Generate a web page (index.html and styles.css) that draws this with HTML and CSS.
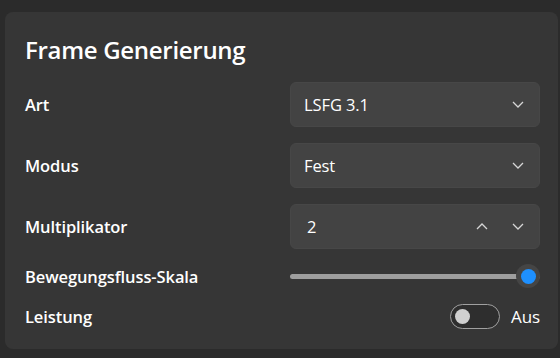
FILE: index.html
```html
<!DOCTYPE html>
<html lang="de">
<head>
    <meta charset="UTF-8">
    <meta name="viewport" content="width=device-width, initial-scale=1.0">
    <title>Frame Generierung</title>
    <link rel="stylesheet" href="styles.css">
</head>
<body>
    <div class="settings-card">
        <h2 class="card-title">Frame Generierung</h2>

        <div class="setting-row">
            <div class="setting-label">Art</div>
            <div class="combo-box">
                <span class="combo-value">LSFG 3.1</span>
                <svg class="chevron" width="12" height="7" viewBox="0 0 12 7"><path d="M1 1l5 5 5-5"/></svg>
            </div>
        </div>

        <div class="setting-row">
            <div class="setting-label">Modus</div>
            <div class="combo-box">
                <span class="combo-value">Fest</span>
                <svg class="chevron" width="12" height="7" viewBox="0 0 12 7"><path d="M1 1l5 5 5-5"/></svg>
            </div>
        </div>

        <div class="setting-row">
            <div class="setting-label">Multiplikator</div>
            <div class="combo-box number-box">
                <span class="combo-value">2</span>
                <div class="spin-buttons">
                    <svg class="chevron" width="12" height="7" viewBox="0 0 12 7"><path d="M1 6l5-5 5 5"/></svg>
                    <svg class="chevron" width="12" height="7" viewBox="0 0 12 7"><path d="M1 1l5 5 5-5"/></svg>
                </div>
            </div>
        </div>

        <div class="setting-row slider-row">
            <div class="setting-label">Bewegungsfluss-Skala</div>
            <div class="slider">
                <div class="slider-track"></div>
                <div class="slider-thumb"><div class="thumb-dot"></div></div>
            </div>
        </div>

        <div class="setting-row toggle-row">
            <div class="setting-label">Leistung</div>
            <div class="toggle-wrap">
                <div class="toggle-switch"><div class="toggle-knob"></div></div>
                <span class="toggle-text">Aus</span>
            </div>
        </div>
    </div>
</body>
</html>
```

FILE: styles.css
```css
body {
    margin: 0;
    background: #2b2b2b;
    font-family: "Open Sans", "Noto Sans", sans-serif;
    color: #ffffff;
}

.settings-card {
    margin: 12px 2px 0 5px;
    height: 337px;
    box-sizing: border-box;
    background: #363636;
    border-radius: 8px;
    padding: 23px 18px 0 20px;
}

.card-title {
    margin: 0 0 17px 0;
    font-size: 24px;
    font-weight: 600;
    line-height: 30px;
    letter-spacing: -0.3px;
}

.setting-row {
    display: flex;
    align-items: center;
    height: 45px;
    margin-bottom: 16px;
}

.setting-label {
    width: 265px;
    font-size: 16.5px;
    font-weight: 600;
    letter-spacing: -0.1px;
}

.combo-box {
    flex: 1;
    height: 45px;
    box-sizing: border-box;
    background: #434343;
    border: 1px solid #474747;
    border-radius: 6px;
    display: flex;
    align-items: center;
    justify-content: space-between;
    padding: 0 15px 0 13px;
}

.combo-value {
    font-size: 16.5px;
    letter-spacing: -0.1px;
}

.number-box .combo-value {
    padding-left: 3px;
}

.chevron {
    fill: none;
    stroke: #d6d6d6;
    stroke-width: 1.3;
}

.spin-buttons {
    display: flex;
    gap: 24px;
}

.slider-row {
    height: 40px;
    margin-top: -9px;
    margin-bottom: 8px;
}

.slider {
    flex: 1;
    position: relative;
    height: 24px;
    display: flex;
    align-items: center;
}

.slider-track {
    width: 100%;
    height: 5px;
    background: #9e9e9e;
    border-radius: 3px;
}

.slider-thumb {
    position: absolute;
    right: 0;
    top: 0;
    width: 24px;
    height: 24px;
    border-radius: 50%;
    background: #454545;
    display: flex;
    align-items: center;
    justify-content: center;
}

.thumb-dot {
    width: 15px;
    height: 15px;
    border-radius: 50%;
    background: #1e90ff;
}

.toggle-row {
    height: 24px;
    margin-bottom: 0;
}

.toggle-wrap {
    flex: 1;
    display: flex;
    justify-content: flex-end;
    align-items: center;
    gap: 11px;
}

.toggle-switch {
    width: 50px;
    height: 25px;
    box-sizing: border-box;
    border: 1px solid #a0a0a0;
    border-radius: 13px;
    background: #2e2e2e;
    display: flex;
    align-items: center;
    padding-left: 4px;
}

.toggle-knob {
    width: 15px;
    height: 15px;
    border-radius: 50%;
    background: #d0d0d0;
}

.toggle-text {
    font-size: 17px;
    letter-spacing: -0.1px;
}
```
